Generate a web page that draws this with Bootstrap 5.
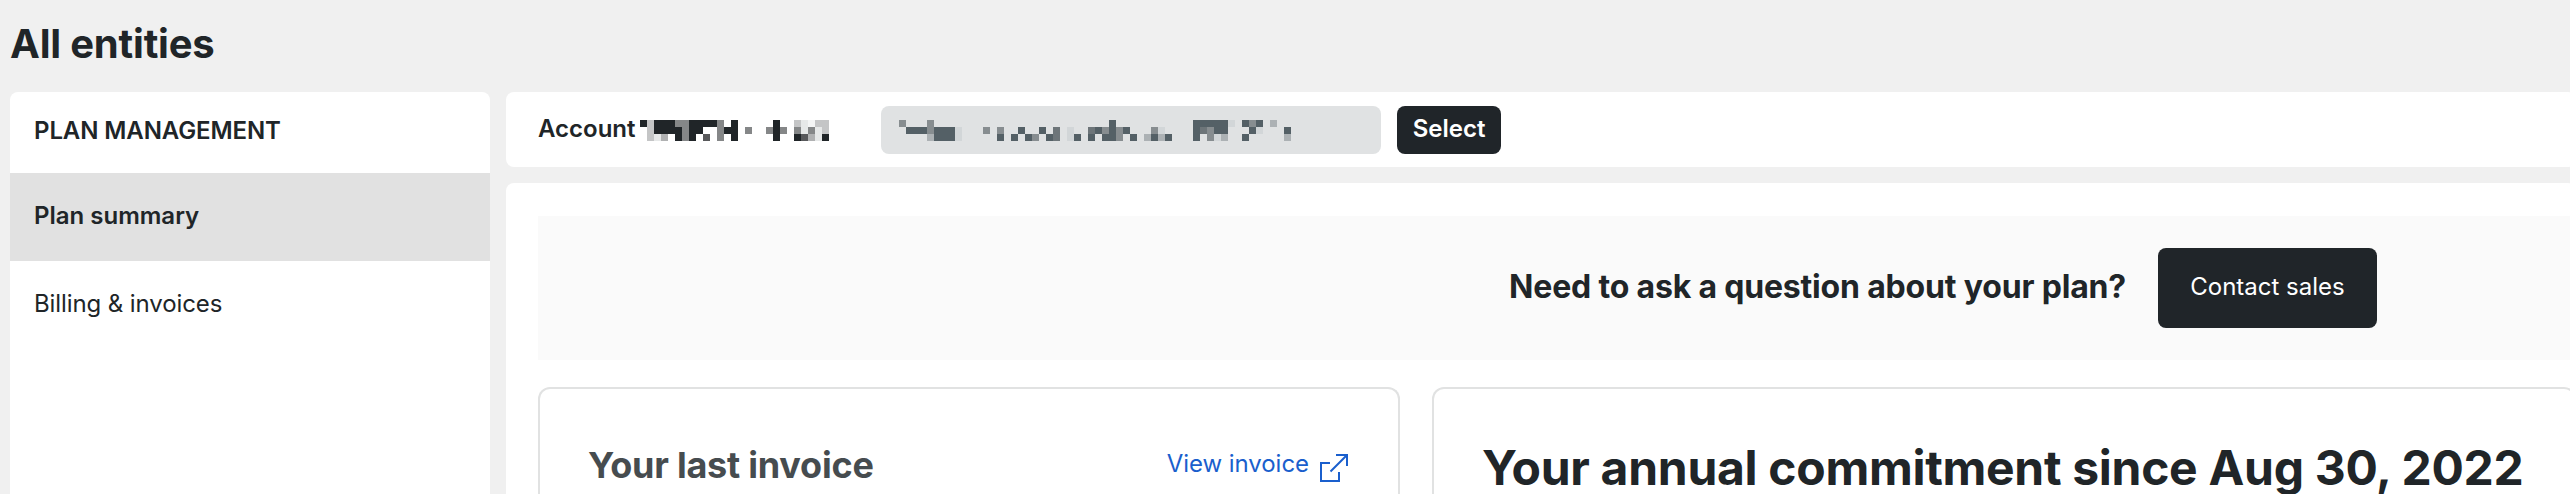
<!DOCTYPE html>
<html lang="en">
<head>
<meta charset="utf-8">
<title>All entities</title>
<link href="https://cdn.jsdelivr.net/npm/bootstrap@5.3.0/dist/css/bootstrap.min.css" rel="stylesheet">
<style>
  html, body { height: 100%; }
  body { font-family: Inter, "Liberation Sans", sans-serif; font-size: 24px; line-height: 32px; color: #202528; background: #f0f0f0; overflow: hidden; }
  .page-title { font-size: 40px; line-height: 48px; font-weight: 700; letter-spacing: -.2px; padding: 20px 10px 24px; }
  .page-grid { height: 402px; padding-left: 10px; gap: 16px; }
  .side-panel { width: 480px; border-radius: 8px 8px 0 0; overflow: hidden; }
  .side-head { height: 81px; padding: 23px 24px 0; font-weight: 600; letter-spacing: -.1px; }
  .side-link { height: 88px; padding: 27px 24px 0; color: #202528; border: 0; border-radius: 0; background: transparent; line-height: 32px; letter-spacing: -.1px; }
  .side-link.active { background: #e1e1e1; color: #202528; font-weight: 600; letter-spacing: 0; }
  .main-col { width: 2070px; gap: 16px; }
  .account-bar { height: 75px; padding: 14px 32px 0; border-radius: 8px; }
  .account-label { width: 98px; line-height: 46px; font-weight: 600; }
  .account-name { margin-left: 4px; margin-top: 14px; }
  .account-field { width: 500px; height: 48px; margin-left: 52px; padding: 14px 18px; border-radius: 8px; background: #e0e2e3; }
  .btn-ink { background: #202529; color: #fff; border: 0; font-size: 24px; line-height: 32px; border-radius: 8px; white-space: nowrap; }
  .btn-ink:hover { background: #353b40; color: #fff; }
  .btn-select { height: 48px; width: 104px; padding: 7px 0 9px; margin-left: 16px; font-weight: 600; }
  .btn-sales { height: 80px; width: 219px; padding: 23px 0 25px; }
  .content-panel { padding: 33px 0 0 32px; border-radius: 8px 8px 0 0; }
  .ask-banner { height: 144px; padding-right: 199px; gap: 32px; background: #fafafa; }
  .ask-text { font-size: 32px; line-height: 40px; font-weight: 700; letter-spacing: -.18px; padding-bottom: 2px; }
  .plan-cards { gap: 32px; margin-top: 27px; }
  .plan-card { height: 107px; border: 2px solid #e1e2e2; border-bottom: 0; border-radius: 12px 12px 0 0; padding: 0 48px; }
  .card-invoice { width: 862px; padding-right: 50px; }
  .card-commit { width: 1144px; }
  .invoice-title { font-size: 36px; line-height: 44px; font-weight: 700; letter-spacing: -.23px; color: #464c4f; margin-top: 54px; }
  .invoice-link { margin-top: 59px; color: #1a5fcd; gap: 11px; line-height: 32px; letter-spacing: -.05px; }
  .invoice-link svg { margin-top: 6px; }
  .commit-title { font-size: 48px; line-height: 48px; font-weight: 700; letter-spacing: -.29px; margin-top: 55px; white-space: nowrap; }
</style>
</head>
<body>
<h1 class="page-title m-0">All entities</h1>
<div class="page-grid d-flex">
  <aside class="side-panel bg-white flex-shrink-0">
    <div class="side-head">PLAN MANAGEMENT</div>
    <nav class="list-group list-group-flush">
      <a class="side-link list-group-item active" href="#">Plan summary</a>
      <a class="side-link list-group-item" href="#">Billing &amp; invoices</a>
    </nav>
  </aside>
  <main class="main-col d-flex flex-column flex-shrink-0">
    <section class="account-bar bg-white d-flex align-items-start flex-shrink-0">
      <div class="account-label">Account</div>
      <svg class="account-name mosaic" width="189" height="21" data-set="ink" shape-rendering="crispEdges"></svg>
      <div class="account-field d-flex"><svg class="mosaic" width="392" height="21" data-set="field" shape-rendering="crispEdges"></svg></div>
      <button class="btn btn-ink btn-select" type="button">Select</button>
    </section>
    <section class="content-panel bg-white flex-grow-1">
      <div class="ask-banner d-flex align-items-center justify-content-end">
        <div class="ask-text">Need to ask a question about your plan?</div>
        <button class="btn btn-ink btn-sales" type="button">Contact sales</button>
      </div>
      <div class="plan-cards d-flex">
        <div class="plan-card card-invoice flex-shrink-0 d-flex justify-content-between align-items-start">
          <h2 class="invoice-title mb-0">Your last invoice</h2>
          <a class="invoice-link d-flex text-decoration-none" href="#">View invoice
            <svg width="28" height="28" viewBox="0 0 28 28" fill="none" stroke="currentColor" stroke-width="2"><path d="M10 9H1V27H19V18M16 1H27V12M27 1L10.5 17.5"/></svg>
          </a>
        </div>
        <div class="plan-card card-commit flex-shrink-0">
          <h2 class="commit-title mb-0">Your annual commitment since Aug 30, 2022</h2>
        </div>
      </div>
    </section>
  </main>
</div>
<script src="https://cdn.jsdelivr.net/npm/bootstrap@5.3.0/dist/js/bootstrap.bundle.min.js"></script>
<script>
  // Redacted values: each letter is one 7px cell of a shade.
  const sets = {
    ink: {
      shades: { K: '#202528', G: '#858788', D: '#58595b', B: '#b0b1b2', L: '#c4c5c6', E: '#e6e8e8', F: '#f4f5f5' },
      rows: [
        'KLKKKGGKKKKG.K.....K..LEFLL',
        '.LKKKKGKK..GKK.G..GKG.GEGEL',
        '.LEB.KGK.D.G.K.....K..KDBEK'
      ]
    },
    field: {
      shades: { K: '#546066', D: '#6d7579', G: '#878d90', B: '#acb1b4', L: '#d2d6d8' },
      rows: [
        'G...G.........................K...........KKKKKL.KGK.B..',
        '.KKKGKKKL...G.G..K..K.D.L..DKGKGK...GL....KDGKK...KL...K',
        '....BKKKL.....K.K.KG.KD.LK.K.KKG.K.BKBK...K.GLB..K.....B'
      ]
    }
  };
  document.querySelectorAll('.mosaic').forEach(svg => {
    const { shades, rows } = sets[svg.dataset.set];
    svg.innerHTML = rows.map((row, y) => [...row].map((c, x) =>
      shades[c] ? `<rect x="${x * 7}" y="${y * 7}" width="7" height="7" fill="${shades[c]}"/>` : '').join('')).join('');
  });
</script>
</body>
</html>
